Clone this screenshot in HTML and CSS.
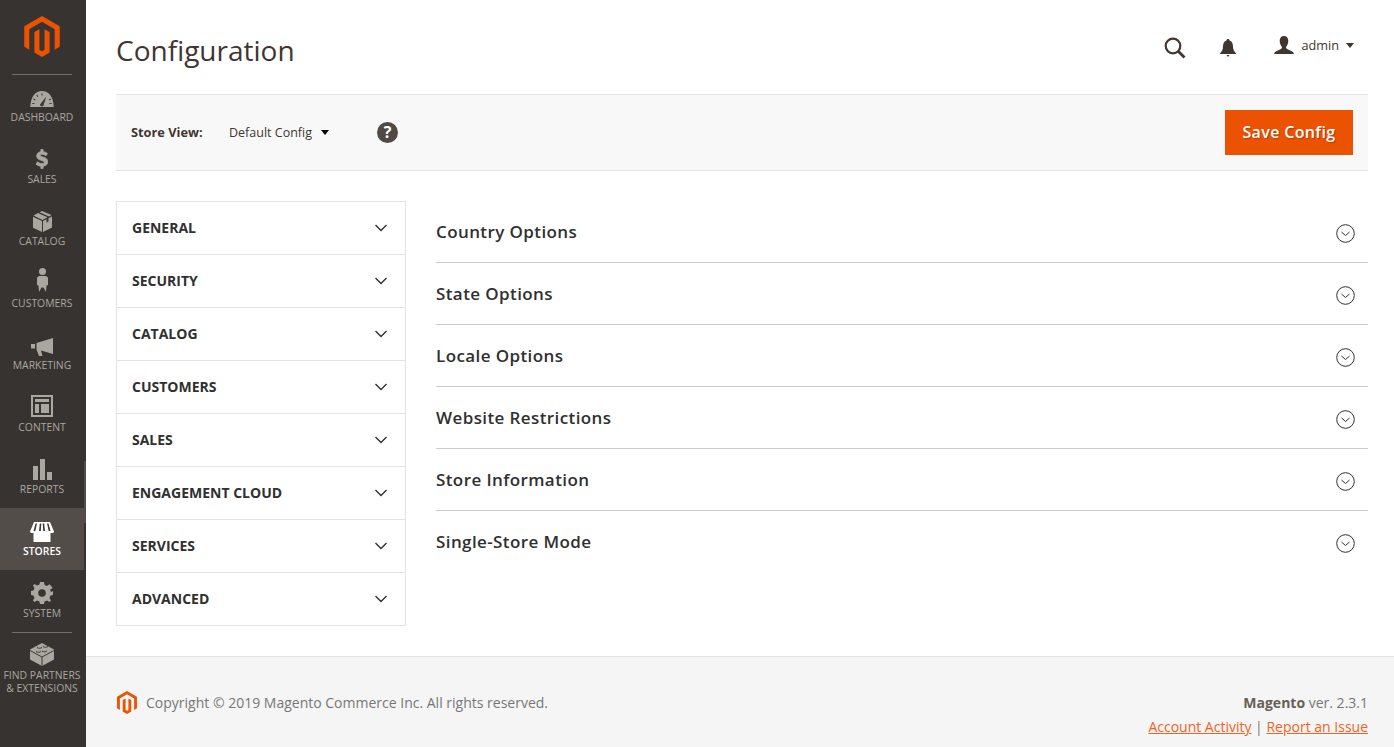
FILE: index.html
```html
<!DOCTYPE html>
<html lang="en">

<head>
    <meta charset="UTF-8">
    <title>Configuration</title>
    <link rel="stylesheet" href="styles.css">
</head>

<body>
    <nav class="menu">
        <div class="menu-logo">
            <svg width="36" height="41" viewBox="1.600 0 20.800 24">
                <path fill="#eb5202" d="M12 24l-4.455-2.572v-12l2.970-1.715v12.001l1.485.902 1.485-.902V7.713l2.971 1.715v12L12 24zM22.391 6v12l-2.969 1.714V7.713L12 3.430 4.574 7.713v12.001L1.609 18V6L12 0l10.391 6z" />
            </svg>
        </div>
        <a class="menu-item">
            <svg class="menu-icon" width="24" height="18" viewBox="0 0 24 18">
                <path fill="#aaa6a0" d="M12 1C5.500 1 .6 6.500.3 17H23.700C23.400 6.500 18.500 1 12 1Z" />
                <path fill="#3d3935" d="M10 14.500 16.300 6.500 13.500 15.500A1.900 1.900 0 0 1 10 14.500ZM11.500 3.300h1v2.200h-1ZM6.300 5l.9-.5 1 1.900-.9.5ZM3.200 9.300l.5-.9 1.900 1.100-.5.900ZM2.300 13h2.200v1H2.300ZM19.500 13h2.200v1H19.500ZM18.800 9.500l1.900-1.100.5.900-1.900 1.100Z" />
            </svg>
            <span>DASHBOARD</span>
        </a>
        <a class="menu-item">
            <svg class="menu-icon icon-sales" width="12" height="20" viewBox="0 0 14 22">
                <path fill="#aaa6a0" stroke="#aaa6a0" stroke-width="1" d="M5.700 0h2.600v2.400C10.500 2.700 12.200 3.500 13.300 4.500L11.700 7.200C10.500 6.200 8.900 5.500 7.200 5.500 5.700 5.500 4.900 6 4.900 6.900 4.900 9 13.800 8.200 13.800 14.300 13.800 17 11.800 18.900 8.300 19.400V22H5.700V19.500C3.500 19.200 1.400 18.300 0 17L1.800 14.300C3.300 15.500 5.200 16.400 7 16.400 8.800 16.400 9.700 15.700 9.700 14.700 9.700 12.300.8 13.200.8 7.200.8 4.700 2.700 2.900 5.700 2.400Z" />
            </svg>
            <span>SALES</span>
        </a>
        <a class="menu-item">
            <svg class="menu-icon" width="19" height="21" viewBox="0 0 19 21">
                <path fill="#aaa6a0" d="M9 0 18.500 4 16 5.400 6.500 1.200ZM5 1.900 14.500 6.200 12.600 7.300 9.500 8.900 .5 4.500ZM0 5.700 9 10V21L0 16.700ZM19 5.500V16.500L10 21V10L13.500 8.200V11.500L15.500 10.400V7.200Z" />
            </svg>
            <span>CATALOG</span>
        </a>
        <a class="menu-item">
            <svg class="menu-icon icon-customers" width="11" height="24" viewBox="0 0 11 24">
                <circle fill="#aaa6a0" cx="5.500" cy="3.500" r="3.500" />
                <path fill="#aaa6a0" d="M2 8H9L11 9.500V17L9.500 17.500 9 24 6.500 19.500H4.500L2 24 1.500 17.500 0 17V9.500Z" />
            </svg>
            <span>CUSTOMERS</span>
        </a>
        <a class="menu-item">
            <svg class="menu-icon" width="22" height="18" viewBox="0 0 22 18">
                <path fill="#aaa6a0" d="M22 0V16L10 12.500 11.500 18H8L5.500 11.500V5L22 0ZM0 6H4V10.500H0Z" />
            </svg>
            <span>MARKETING</span>
        </a>
        <a class="menu-item">
            <svg class="menu-icon icon-content" width="22" height="22" viewBox="0 0 22 22">
                <path fill="#aaa6a0" fill-rule="evenodd" d="M0 0H22V22H0ZM2 2V20H20V2ZM4 4H18V7H4ZM4 9H8V18H4ZM10 9H18V18H10Z" />
            </svg>
            <span>CONTENT</span>
        </a>
        <a class="menu-item">
            <svg class="menu-icon" width="19" height="21" viewBox="0 0 19 21">
                <path fill="#aaa6a0" d="M0 7H5V21H0ZM7 0H12V21H7ZM14 13H19V21H14Z" />
            </svg>
            <span>REPORTS</span>
        </a>
        <a class="menu-item active">
            <svg class="menu-icon" width="24" height="20" viewBox="0 0 24 20">
                <path fill="#fff" d="M4 0H20L24 9.500C24 11 22 11.500 20.500 10.700V20H3.500V10.700C2 11.500 0 11 0 9.500Z" />
                <path fill="#3d3935" d="M5.500 1.500H7L5.300 9H3.500ZM9.800 1.500H11.300L10.800 9H9ZM12.700 1.500H14.200L15 9H13.200ZM17 1.500H18.500L20.500 9H18.700Z" />
            </svg>
            <span>STORES</span>
        </a>
        <a class="menu-item">
            <svg class="menu-icon" width="22" height="22" viewBox="0 0 22 22">
                <path fill="#aaa6a0" fill-rule="evenodd" d="M9 0H13L13.600 3 15.900 4 18.500 2.300 19.700 3.500 21.700 6.100 19 7.800 20 10 22 9V13L19.500 13.600 18.500 16 20 18.500 18.500 20 16 18.500 13.600 19.500 13 22H9L8.400 19.500 6 18.500 3.500 20 2 18.500 3.500 16 2.500 13.600 0 13V9L2.500 8.400 3.500 6 2 3.500 3.500 2 6 3.500 8.400 2.500ZM11 7.200A3.800 3.800 0 1 0 11 14.800 3.800 3.800 0 1 0 11 7.200Z" />
            </svg>
            <span>SYSTEM</span>
        </a>
        <a class="menu-item partners">
            <svg class="menu-icon" width="24" height="23" viewBox="0 0 24 23">
                <path fill="#aaa6a0" d="M12 0 24 6.500V16.500L12 23 0 16.500V6.500Z" />
                <path fill="none" stroke="#3d3935" stroke-width="1" d="M0 7.500 12 14 24 7.500M12 14V23M7 4.500C8.500 5.500 10.500 5.500 12 4.500M12 8C13.500 9 15.500 9 17 8M6 8.500C7.500 9.500 9.500 9.500 11 8.500M13 3.500C14.500 4.500 16.500 4.500 18 3.500" />
            </svg>
            <span>FIND PARTNERS<br>&amp; EXTENSIONS</span>
        </a>
    </nav>

    <div class="page">
        <header class="page-header">
            <h1>Configuration</h1>
            <div class="header-tools">
                <svg class="tool-search" width="22" height="22" viewBox="0 0 22 22">
                    <circle fill="none" stroke="#41362f" stroke-width="2.200" cx="9" cy="9" r="7.300" />
                    <path stroke="#41362f" stroke-width="2.800" d="M14 14 20.500 20.500" />
                </svg>
                <svg class="tool-bell" width="16" height="18" viewBox="0 0 16 18">
                    <path fill="#41362f" d="M8 0C9 0 9.500 .6 9.500 1.500 12 2.200 13 4.500 13 7.500 13 10.500 14 12 16 14.500V15H0V14.500C2 12 3 10.500 3 7.500 3 4.500 4 2.200 6.500 1.500 6.500 .6 7 0 8 0ZM6.500 16H9.500L8 18Z" />
                </svg>
                <div class="user">
                    <svg width="20" height="18" viewBox="0 0 20 18">
                        <path fill="#41362f" d="M10 0C13 0 14.300 2 14.300 5 14.300 7.500 13 10 12 11 12 12.500 13 13 15 14 17.500 15 19.500 15.500 20 18H0C.5 15.500 2.500 15 5 14 7 13 8 12.500 8 11 7 10 5.700 7.500 5.700 5 5.700 2 7 0 10 0Z" />
                    </svg>
                    <span>admin</span>
                    <i class="caret caret-user"></i>
                </div>
            </div>
        </header>

        <div class="action-bar">
            <span class="store-label">Store View:</span>
            <span class="store-value">Default Config</span>
            <i class="caret"></i>
            <span class="help">?</span>
            <button class="save-btn">Save Config</button>
        </div>

        <main class="columns">
            <ul class="tabs">
                <li>GENERAL<svg class="chev" width="12" height="8" viewBox="0 0 12 8"><path d="M.5 1 6 6.500 11.500 1" /></svg></li>
                <li>SECURITY<svg class="chev" width="12" height="8" viewBox="0 0 12 8"><path d="M.5 1 6 6.500 11.500 1" /></svg></li>
                <li>CATALOG<svg class="chev" width="12" height="8" viewBox="0 0 12 8"><path d="M.5 1 6 6.500 11.500 1" /></svg></li>
                <li>CUSTOMERS<svg class="chev" width="12" height="8" viewBox="0 0 12 8"><path d="M.5 1 6 6.500 11.500 1" /></svg></li>
                <li>SALES<svg class="chev" width="12" height="8" viewBox="0 0 12 8"><path d="M.5 1 6 6.500 11.500 1" /></svg></li>
                <li>ENGAGEMENT CLOUD<svg class="chev" width="12" height="8" viewBox="0 0 12 8"><path d="M.5 1 6 6.500 11.500 1" /></svg></li>
                <li>SERVICES<svg class="chev" width="12" height="8" viewBox="0 0 12 8"><path d="M.5 1 6 6.500 11.500 1" /></svg></li>
                <li>ADVANCED<svg class="chev" width="12" height="8" viewBox="0 0 12 8"><path d="M.5 1 6 6.500 11.500 1" /></svg></li>
            </ul>
            <div class="sections">
                <div class="section">Country Options<svg class="toggle" width="19" height="19" viewBox="0 0 19 19"><circle cx="9.500" cy="9.500" r="8.800" /><path d="M5.500 8 9.500 11.500 13.500 8" /></svg></div>
                <div class="section">State Options<svg class="toggle" width="19" height="19" viewBox="0 0 19 19"><circle cx="9.500" cy="9.500" r="8.800" /><path d="M5.500 8 9.500 11.500 13.500 8" /></svg></div>
                <div class="section">Locale Options<svg class="toggle" width="19" height="19" viewBox="0 0 19 19"><circle cx="9.500" cy="9.500" r="8.800" /><path d="M5.500 8 9.500 11.500 13.500 8" /></svg></div>
                <div class="section">Website Restrictions<svg class="toggle" width="19" height="19" viewBox="0 0 19 19"><circle cx="9.500" cy="9.500" r="8.800" /><path d="M5.500 8 9.500 11.500 13.500 8" /></svg></div>
                <div class="section">Store Information<svg class="toggle" width="19" height="19" viewBox="0 0 19 19"><circle cx="9.500" cy="9.500" r="8.800" /><path d="M5.500 8 9.500 11.500 13.500 8" /></svg></div>
                <div class="section">Single-Store Mode<svg class="toggle" width="19" height="19" viewBox="0 0 19 19"><circle cx="9.500" cy="9.500" r="8.800" /><path d="M5.500 8 9.500 11.500 13.500 8" /></svg></div>
            </div>
        </main>

        <footer class="page-footer">
            <div class="copyright">
                <svg width="20" height="23" viewBox="1.600 0 20.800 24">
                    <path fill="#eb5202" d="M12 24l-4.455-2.572v-12l2.970-1.715v12.001l1.485.902 1.485-.902V7.713l2.971 1.715v12L12 24zM22.391 6v12l-2.969 1.714V7.713L12 3.430 4.574 7.713v12.001L1.609 18V6L12 0l10.391 6z" />
                </svg>
                <span>Copyright © 2019 Magento Commerce Inc. All rights reserved.</span>
            </div>
            <div class="legal">
                <div class="version"><b>Magento</b> ver. 2.3.1</div>
                <div class="links"><a>Account Activity</a> | <a>Report an Issue</a></div>
            </div>
        </footer>
    </div>
</body>

</html>
```

FILE: styles.css
```css
* {
    box-sizing: border-box;
}

body {
    font-family: 'Open Sans', sans-serif;
    color: #303030;
    background-color: #fff;
    margin: 0;
    display: flex;
    min-height: 747px;
}

.menu {
    position: relative;
    width: 86px;
    flex: none;
    background: #373330;
}

/* lighter strip on the menu's right edge */
.menu::after {
    content: "";
    position: absolute;
    top: 461px;
    right: 0;
    width: 2px;
    height: 62px;
    background: #524d49;
}

.menu-logo {
    height: 75px;
    padding-top: 16px;
    margin: 0 14px 0 12px;
    border-bottom: 1px solid #736e69;
    display: flex;
    justify-content: center;
}

.menu-item {
    height: 62px;
    width: 84px;
    display: flex;
    flex-direction: column;
    align-items: center;
    justify-content: flex-end;
    padding-bottom: 12px;
    font-size: 10.400px;
    line-height: 13px;
    color: #aaa6a0;
    text-align: center;
}

.menu-item:first-of-type {
    margin-top: -1px;
}

.menu-icon {
    margin-bottom: 3px;
}

.icon-sales {
    margin-bottom: 4px;
}

.icon-customers {
    margin-bottom: 5px;
}

.icon-content {
    margin-bottom: 4px;
}

.menu-item.active {
    background: #524d49;
    color: #fff;
    font-weight: 600;
}

.menu-item.partners {
    width: auto;
    height: auto;
    justify-content: flex-start;
    margin: 0 14px 0 12px;
    padding: 10px 0 0;
    border-top: 1px solid #736e69;
    white-space: nowrap;
}

.page {
    flex: 1;
    min-width: 0;
    display: flex;
    flex-direction: column;
}

.page-header {
    height: 94px;
    padding: 0 40px 0 30px;
    display: flex;
    justify-content: space-between;
}

h1 {
    margin: 31px 0 0;
    font-size: 28px;
    font-weight: 400;
    line-height: 38px;
    color: #41362f;
}

.header-tools {
    display: flex;
    align-items: flex-start;
    padding-top: 36px;
}

.tool-search {
    margin-top: 1px;
}

.tool-bell {
    margin: 3px 0 0 34px;
}

.user {
    display: flex;
    align-items: center;
    margin-left: 38px;
    font-size: 12.700px;
    color: #41362f;
}

.user span {
    margin-left: 7px;
}

.caret {
    width: 0;
    height: 0;
    display: inline-block;
    border-left: 4.500px solid transparent;
    border-right: 4.500px solid transparent;
    border-top: 5px solid #000;
    margin-left: 9px;
}

.caret-user {
    border-top-color: #41362f;
    margin-left: 7px;
}

.action-bar {
    height: 77px;
    margin: 0 26px 0 30px;
    padding: 0 15px;
    background: #f8f8f8;
    border-top: 1px solid #e3e3e3;
    border-bottom: 1px solid #e3e3e3;
    display: flex;
    align-items: center;
}

.store-label {
    font-size: 12.800px;
    font-weight: 700;
    color: #41362f;
    width: 98px;
    margin-bottom: 2px;
}

.store-value {
    font-size: 12.500px;
    color: #41362f;
}

.help {
    width: 21px;
    height: 21px;
    border-radius: 50%;
    background: #514943;
    color: #fff;
    font-size: 16px;
    font-weight: 700;
    line-height: 21px;
    text-align: center;
    margin-left: 48px;
}

.save-btn {
    margin-left: auto;
    width: 128px;
    height: 45px;
    padding: 0 0 2px;
    border: 0;
    background: #eb5202;
    color: #fff;
    font-family: inherit;
    font-size: 16px;
    font-weight: 600;
    letter-spacing: 0.350px;
    text-shadow: 1px 1px 1px rgba(0, 0, 0, 0.25);
}

.columns {
    display: flex;
    margin: 30px 26px 0 30px;
    height: 455px;
}

.tabs {
    list-style: none;
    width: 290px;
    height: 425px;
    flex: none;
    margin: 0;
    padding: 0;
    border: 1px solid #e3e3e3;
    border-bottom: 0;
}

.tabs li {
    height: 53px;
    padding: 0 18px 2px 15px;
    border-bottom: 1px solid #e3e3e3;
    display: flex;
    align-items: center;
    justify-content: space-between;
    font-size: 14px;
    font-weight: 700;
    color: #303030;
}

.chev {
    margin-top: 2px;
}

.chev path {
    fill: none;
    stroke: #303030;
    stroke-width: 1.400;
}

.sections {
    flex: 1;
    margin-left: 30px;
}

.section {
    height: 62px;
    padding: 0 13px 0 0;
    border-bottom: 1px solid #ccc;
    display: flex;
    align-items: center;
    justify-content: space-between;
    font-size: 17px;
    font-weight: 600;
    letter-spacing: 0.400px;
    color: #303030;
}

.section:last-child {
    border-bottom-color: transparent;
}

.toggle {
    margin-top: 3px;
}

.toggle circle,
.toggle path {
    fill: none;
    stroke: #303030;
    stroke-width: 1;
}

.page-footer {
    flex: 1;
    background: #f5f5f5;
    border-top: 1px solid #e3e3e3;
    padding: 0 26px 0 30px;
    display: flex;
    justify-content: space-between;
    font-size: 14px;
    color: #777;
}

.copyright {
    display: flex;
    align-items: center;
    gap: 9px;
    height: 90px;
}

.copyright svg {
    margin-left: 1px;
}

.legal {
    text-align: right;
    padding-top: 36px;
    line-height: 20px;
}

.version {
    margin-bottom: 4px;
}

.version b {
    color: #676056;
}

.links a {
    color: #f26322;
    text-decoration: underline;
}
```
